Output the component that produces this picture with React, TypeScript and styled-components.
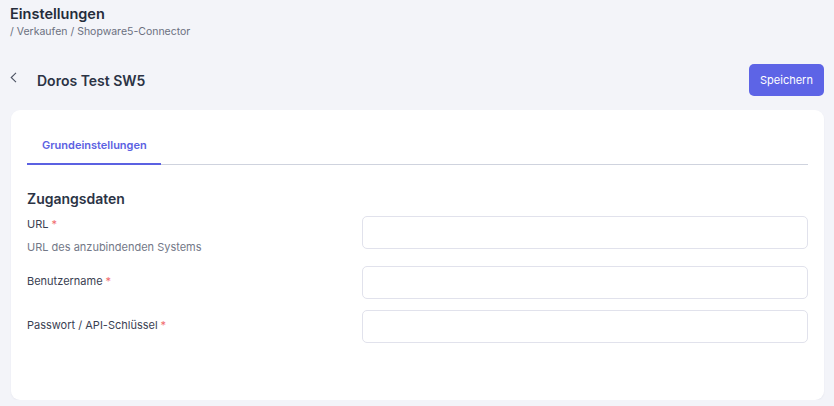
import React from "react";
import styled, { createGlobalStyle } from "styled-components";

// STYLES
const GlobalStyle = createGlobalStyle`
  * { box-sizing: border-box; }
  body {
    margin: 0;
    background: #f3f4f9;
    font-family: Inter, "Noto Sans", sans-serif;
    color: #2d3446;
  }
`;

const Page = styled.div`
  padding: 4px 10px 0 10px;
`;

const PageHeader = styled.header`
  display: flex;
  flex-direction: column;
`;

const PageTitle = styled.h1`
  margin: 0;
  font-size: 14.5px;
  line-height: 20px;
  font-weight: 600;
  color: #252c3b;
`;

const Breadcrumb = styled.div`
  font-size: 10.5px;
  line-height: 14px;
  color: #6b7080;
  margin-top: 1px;
`;

const Toolbar = styled.div`
  display: flex;
  align-items: center;
  justify-content: space-between;
  margin-top: 25px;
  height: 32px;
`;

const ToolbarLeft = styled.div`
  display: flex;
  align-items: center;
  gap: 20px;
`;

const BackButton = styled.button`
  display: flex;
  align-items: center;
  padding: 0;
  margin-top: -5px;
  border: none;
  background: none;
  cursor: pointer;
  color: #4b5263;
`;

const RecordTitle = styled.h2`
  margin: 0;
  font-size: 14px;
  line-height: 18px;
  font-weight: 600;
  color: #2b3345;
  padding-top: 2px;
`;

const PrimaryButton = styled.button`
  height: 32px;
  width: 75px;
  padding: 0;
  border: none;
  border-radius: 5px;
  background: #5d64e6;
  color: #ffffff;
  font-family: inherit;
  font-size: 11px;
  cursor: pointer;
`;

const Card = styled.section`
  margin: 14px 0 0 1px;
  width: 813px;
  background: #ffffff;
  border-radius: 9px;
  box-shadow: 0 1px 2px rgba(30, 40, 80, 0.05);
  padding: 16px 16px 57px 16px;
`;

const Tabs = styled.div`
  display: flex;
  border-bottom: 1px solid #cfd3de;
`;

const Tab = styled.div<{ $active?: boolean }>`
  width: 134px;
  height: 39px;
  padding-left: 15px;
  display: flex;
  align-items: center;
  font-size: 11px;
  font-weight: 600;
  color: ${(p) => (p.$active ? "#5b61e2" : "#6b7080")};
  border-bottom: 2px solid ${(p) => (p.$active ? "#5b61e2" : "transparent")};
  margin-bottom: -1px;
`;

const SectionTitle = styled.h3`
  margin: 25px 0 8px 0;
  font-size: 14px;
  line-height: 18px;
  font-weight: 600;
  color: #2b3345;
`;

const Form = styled.div`
  display: flex;
  flex-direction: column;
  gap: 11px;
`;

const FieldRow = styled.div`
  display: grid;
  grid-template-columns: 335px 446px;
  align-items: start;
`;

const LabelBlock = styled.div<{ $offset: number }>`
  display: flex;
  flex-direction: column;
  padding-top: ${(p) => p.$offset}px;
`;

const Label = styled.label`
  font-size: 11px;
  line-height: 16px;
  color: #3a4152;
`;

const Required = styled.span`
  color: #f06a6a;
  margin-left: 3px;
`;

const Hint = styled.div`
  font-size: 11px;
  line-height: 15px;
  margin-top: 8px;
  color: #737887;
`;

const Input = styled.input`
  height: 33px;
  width: 100%;
  border: 1px solid #e1e2ec;
  border-radius: 5px;
  background: #ffffff;
  font-family: inherit;
  font-size: 12px;
  padding: 0 10px;
  outline: none;
`;

// DATA
const fields = [
  { id: "url", label: "URL", hint: "URL des anzubindenden Systems", type: "text" },
  { id: "user", label: "Benutzername", type: "text" },
  { id: "password", label: "Passwort / API-Schlüssel", type: "password" },
];

const ChevronLeft = () => (
  <svg width="7" height="11" viewBox="0 0 7 11" fill="none">
    <polyline points="6,0.8 1.2,5.5 6,10.2" stroke="currentColor" strokeWidth="1.1" />
  </svg>
);

const App: React.FC = () => {
  return (
    <>
      <GlobalStyle />
      <Page>
        <PageHeader>
          <PageTitle>Einstellungen</PageTitle>
          <Breadcrumb>/ Verkaufen / Shopware5-Connector</Breadcrumb>
        </PageHeader>

        <Toolbar>
          <ToolbarLeft>
            <BackButton aria-label="Zurück">
              <ChevronLeft />
            </BackButton>
            <RecordTitle>Doros Test SW5</RecordTitle>
          </ToolbarLeft>
          <PrimaryButton>Speichern</PrimaryButton>
        </Toolbar>

        <Card>
          <Tabs>
            <Tab $active>Grundeinstellungen</Tab>
          </Tabs>

          <SectionTitle>Zugangsdaten</SectionTitle>

          <Form>
            {fields.map((f) => (
              <FieldRow key={f.id}>
                <LabelBlock $offset={f.hint ? 0 : 7}>
                  <Label htmlFor={f.id}>
                    {f.label}
                    <Required>*</Required>
                  </Label>
                  {f.hint && <Hint>{f.hint}</Hint>}
                </LabelBlock>
                <Input id={f.id} type={f.type} />
              </FieldRow>
            ))}
          </Form>
        </Card>
      </Page>
    </>
  );
};

export default App;
